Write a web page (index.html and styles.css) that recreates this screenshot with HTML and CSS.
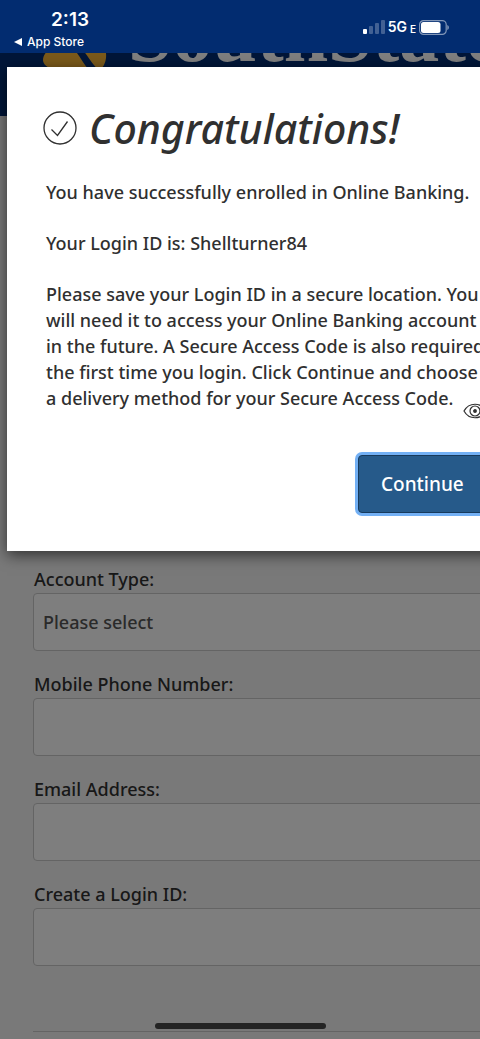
FILE: index.html
```html
<!DOCTYPE html>
<html lang="en">
<head>
<meta charset="utf-8">
<meta name="viewport" content="width=device-width, initial-scale=1">
<title>Online Banking Enrollment</title>
<link rel="stylesheet" href="styles.css">
</head>
<body>
<div class="screen">
  <div class="status">
    <div class="status-left">
      <span class="time">2:13</span>
      <a class="back" href="#">
        <svg class="back-icon" viewBox="0 0 8 8" aria-hidden="true"><path d="M8 0v8L0 4z"/></svg>
        App Store
      </a>
    </div>
    <div class="status-right">
      <svg class="signal" viewBox="0 0 22 14" aria-hidden="true">
        <rect x="0" y="9" width="4" height="5" rx="1"/>
        <g opacity=".25"><rect x="6" y="6" width="4" height="8" rx="1"/><rect x="12" y="3" width="4" height="11" rx="1"/><rect x="18" y="0" width="4" height="14" rx="1"/></g>
      </svg>
      <span class="network">5G</span>
      <span class="network-e">E</span>
      <svg class="battery" viewBox="0 0 30 15" aria-hidden="true">
        <rect x=".6" y=".6" width="26.6" height="13.8" rx="4" fill="none" stroke="#fff" stroke-opacity=".5" stroke-width="1.2"/>
        <rect x="2" y="2" width="19.5" height="11" rx="2.5"/>
        <path d="M28.4 5c1.8.7 1.8 4.3 0 5z" opacity=".6"/>
      </svg>
    </div>
  </div>

  <div class="page">
    <header class="brand">
      <svg class="brand-mark" viewBox="0 0 64 40" aria-hidden="true">
        <path d="M12 12H28C35 15 38 25 46 34H12C4 32 0 28 0 24C0 19 4 13 12 12Z"/>
        <path d="M34 8H60C65 17 64 28 57 34H56C48 28 45 18 34 8Z"/>
      </svg>
      <span class="brand-name">SouthState</span>
    </header>
    <form class="form">
      <div class="field">
        <label for="account">Account Type:</label>
        <select id="account" class="control"><option>Please select</option></select>
      </div>
      <div class="field">
        <label for="phone">Mobile Phone Number:</label>
        <input id="phone" class="control" type="tel">
      </div>
      <div class="field">
        <label for="email">Email Address:</label>
        <input id="email" class="control" type="email">
      </div>
      <div class="field">
        <label for="login">Create a Login ID:</label>
        <input id="login" class="control" type="text">
      </div>
      <hr class="rule">
    </form>
    <div class="backdrop"></div>
    <section class="modal" role="dialog" aria-labelledby="title">
      <div class="heading">
        <svg class="check" viewBox="0 0 34 34" aria-hidden="true"><circle cx="17" cy="17" r="16"/><path d="M8.500 18.500l6 6L24.500 10.500"/></svg>
        <h1 id="title">Congratulations!</h1>
      </div>
      <div class="message">
        <p>You have successfully enrolled in Online Banking.</p>
        <p>Your Login ID is: Shellturner84</p>
        <p>Please save your Login ID in a secure location. You will need it to access your Online Banking account in the future. A Secure Access Code is also required the first time you login. Click Continue and choose a delivery method for your Secure Access Code.</p>
      </div>
      <div class="actions"><button class="continue" type="button">Continue</button></div>
      <svg class="eye" viewBox="0 0 24 16" aria-hidden="true"><path d="M1 8C6-1 18-1 23 8C18 17 6 17 1 8Z"/><circle cx="12" cy="8" r="5"/><circle class="pupil" cx="12" cy="8" r="1.300"/></svg>
    </section>
  </div>
  <div class="home"></div>
</div>
</body>
</html>
```
FILE: styles.css
```css
* { box-sizing: border-box; }
body {
  margin: 0;
  font: 500 18px/26px "Noto Sans", "Open Sans", sans-serif;
  color: #303030;
}
.screen {
  position: relative;
  min-height: 100vh;
  display: flex;
  flex-direction: column;
  overflow: hidden;
  background: #f3f3f3;
}
.status {
  height: 53px;
  display: flex;
  justify-content: space-between;
  padding: 9px 31px 0 14px;
  background: #022c70;
  color: #fff;
  fill: #fff;
  font-family: Inter, "Liberation Sans", sans-serif;
  position: relative;
  z-index: 1;
}
.status-left { display: flex; flex-direction: column; }
.time { padding-left: 37px; font-size: 19px; font-weight: 600; line-height: 22px; }
.back {
  display: flex;
  align-items: center;
  gap: 5px;
  color: #fff;
  font-size: 12px;
  font-weight: 500;
  line-height: 22px;
  text-decoration: none;
}
.back-icon { width: 8px; height: 8px; }
.status-right { display: flex; align-items: center; gap: 3px; height: 36px; }
.signal { width: 22px; height: 14px; }
.network { font-size: 14px; font-weight: 600; line-height: 18px; }
.network-e { font-size: 10px; font-weight: 600; line-height: 12px; padding-top: 3px; }
.battery { width: 30px; height: 15px; }

.page { position: relative; flex: 1; }
.brand {
  height: 63px;
  display: flex;
  align-items: flex-end;
  gap: 21px;
  padding-left: 43px;
  background: #002d72;
  overflow: hidden;
}
.brand-mark { flex: none; width: 64px; height: 40px; margin-bottom: 40px; fill: #f5b335; }
.brand-name {
  margin-bottom: 42px;
  color: #fff;
  font: bold 80px/80px "Liberation Serif", serif;
}
.form {
  display: flex;
  flex-direction: column;
  gap: 20px;
  margin-right: -32px;
  padding: 450px 0 0 33px;
}
.field { display: flex; flex-direction: column; gap: 1px; }
.field label { padding-left: 1px; }
.control {
  appearance: none;
  width: 100%;
  height: 58px;
  padding: 0 9px;
  border: 1px solid #c8c8c8;
  border-radius: 4px;
  background: #fcfcfc;
  color: #555;
  font: inherit;
}
.rule { width: 100%; height: 1px; margin: 45px 0 0; border: 0; background: #c8c8c8; }
.backdrop { position: absolute; inset: 0 0 -20px; background: rgba(0, 0, 0, 0.5); }
.modal {
  position: absolute;
  top: 14px;
  left: 7px;
  right: -48px;
  padding: 36px 32px 38px 36px;
  background: #fff;
  box-shadow: 0 4px 14px rgba(0, 0, 0, 0.6);
}
.heading { display: flex; align-items: center; gap: 12px; }
.check { width: 34px; height: 34px; fill: none; stroke: #303030; stroke-width: 1.3; }
h1 { margin: 0; font-size: 41px; font-weight: 500; font-style: italic; line-height: 50px; }
.message { display: flex; flex-direction: column; gap: 25px; padding: 26px 8px 0 3px; }
.message p { margin: 0; }
.actions { display: flex; justify-content: flex-end; padding-top: 44px; }
.continue {
  width: 138px;
  height: 58px;
  padding: 0 22px;
  border: 1px solid #173a5c;
  border-radius: 4px;
  background: #265a8a;
  box-shadow: 0 0 0 3px #73b0f4;
  color: #fff;
  font: inherit;
  font-size: 19px;
  text-align: left;
}
.eye {
  position: absolute;
  top: 336px;
  right: 41px;
  width: 24px;
  height: 16px;
  fill: none;
  stroke: #303030;
  stroke-width: 1.2;
}
.pupil { fill: #303030; }
.home {
  position: absolute;
  bottom: 10px;
  left: 50%;
  width: 171px;
  height: 6px;
  margin-left: -85px;
  border-radius: 3px;
  background: #242424;
}
```
